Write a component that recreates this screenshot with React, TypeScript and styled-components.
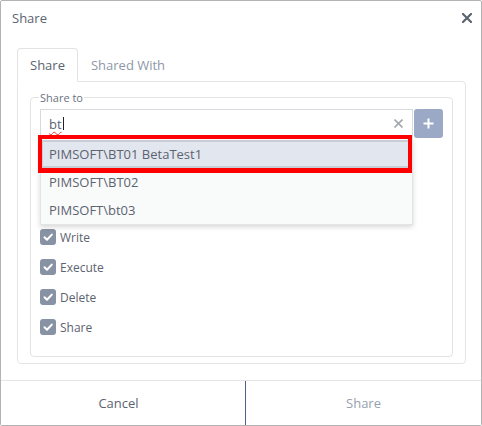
import React from "react";
import styled, { createGlobalStyle } from "styled-components";

const Global = createGlobalStyle`
  html, body { margin: 0; padding: 0; background: #fff; }
  body { font-family: "Open Sans", "Noto Sans", sans-serif; }
  * { box-sizing: border-box; }
`;

const Dialog = styled.div`
  width: 482px;
  height: 426px;
  border: 1px solid #b3b3b3;
  border-radius: 2px;
  display: flex;
  flex-direction: column;
  background: #fff;
  color: #5c6370;
`;

const Header = styled.div`
  height: 33px;
  flex: none;
  display: flex;
  align-items: center;
  justify-content: space-between;
  padding: 0 9px 0 11px;
`;

const Title = styled.div`
  font-size: 13px;
  color: #5c6370;
`;

const CloseButton = styled.button`
  border: 0;
  background: none;
  padding: 0;
  width: 10px;
  height: 10px;
  display: flex;
  cursor: pointer;
`;

const Body = styled.div`
  flex: 1;
  min-height: 0;
  display: flex;
  flex-direction: column;
  padding: 14px 15px 16px 16px;
`;

const Tabs = styled.div`
  display: flex;
  height: 33px;
  flex: none;
`;

const Tab = styled.div<{ $active?: boolean }>`
  height: 34px;
  margin-bottom: -1px;
  padding: 0 12px;
  line-height: 32px;
  font-size: 13px;
  border: 1px solid ${(p) => (p.$active ? "#e3e3e3" : "transparent")};
  border-bottom-color: ${(p) => (p.$active ? "#fff" : "transparent")};
  border-radius: 4px 4px 0 0;
  background: ${(p) => (p.$active ? "#fff" : "transparent")};
  color: ${(p) => (p.$active ? "#5c6370" : "#8e97a8")};
  position: relative;
  z-index: 1;
`;

const Panel = styled.div`
  flex: 1;
  min-height: 0;
  border: 1px solid #e5e5e5;
  border-radius: 0 4px 4px 4px;
  padding: 8px 12px 6px 12px;
  display: flex;
  flex-direction: column;
`;

const Fieldset = styled.fieldset`
  flex: 1;
  margin: 0;
  min-width: 0;
  border: 1px solid #e3e3e3;
  border-radius: 4px;
  padding: 4px 9px 0 9px;
`;

const Legend = styled.legend`
  font-size: 11px;
  line-height: 15px;
  padding: 0 1px;
  margin-left: -1px;
  color: #6b7380;
`;

const InputRow = styled.div`
  display: flex;
  gap: 1px;
  height: 29px;
  position: relative;
`;

const SearchBox = styled.div`
  flex: 1;
  border: 1px solid #d6d9dd;
  display: flex;
  align-items: center;
  padding: 0 9px 0 8px;
  font-size: 13px;
  background: #fff;
  color: #5c6370;
`;

const Typed = styled.span`
  text-decoration: underline wavy #e53935;
  text-decoration-thickness: 1px;
  text-underline-offset: 2px;
`;

const Caret = styled.span`
  width: 1px;
  height: 13px;
  background: #222;
  margin-left: 1px;
`;

const ClearButton = styled.span`
  margin-left: auto;
  width: 9px;
  height: 9px;
  display: flex;
`;

const PlusButton = styled.button`
  width: 29px;
  height: 29px;
  border: 0;
  border-radius: 3px;
  background: #9ba9c6;
  display: flex;
  align-items: center;
  justify-content: center;
  padding: 0;
`;

const Dropdown = styled.div`
  position: absolute;
  top: 100%;
  left: 0;
  width: calc(100% - 30px);
  border: 1px solid #e4e4e4;
  padding-top: 1px;
  background: #f9fafa;
  box-shadow: 0 2px 5px rgba(0, 0, 0, 0.16);
  z-index: 5;
`;

const Option = styled.div<{ $active?: boolean }>`
  height: 28px;
  padding-left: 8px;
  display: flex;
  align-items: center;
  font-size: 13px;
  color: #5c6370;
  background: ${(p) => (p.$active ? "#e2e6ee" : "transparent")};
  box-shadow: ${(p) => (p.$active ? "inset 0 0 0 2px #c9cdd4" : "none")};
`;

const Callout = styled.div`
  position: absolute;
  top: -4px;
  left: -3px;
  width: 374px;
  height: 38px;
  border-style: solid;
  border-color: #ff0000;
  border-width: 4px 4px 5px 4px;
  pointer-events: none;
`;

const CheckList = styled.div`
  margin-top: 24px;
  display: flex;
  flex-direction: column;
`;

const CheckRow = styled.label`
  height: 30px;
  display: flex;
  align-items: center;
  gap: 4px;
  font-size: 12px;
  color: #5c6370;
`;

const Box = styled.span`
  width: 16px;
  height: 16px;
  border-radius: 3px;
  background: #8892a5;
  display: flex;
  align-items: center;
  justify-content: center;
`;

const Footer = styled.div`
  height: 45px;
  flex: none;
  border-top: 1px solid #e5e5e5;
  display: flex;
`;

const FooterButton = styled.button<{ $primary?: boolean }>`
  border: 0;
  border-left: ${(p) => (p.$primary ? "1px solid #4f5f8f" : "0")};
  background: #fff;
  font-family: inherit;
  font-size: 13px;
  color: ${(p) => (p.$primary ? "#959fb0" : "#5c6370")};
  display: flex;
  align-items: center;
  justify-content: center;
  padding: 0 ${(p) => (p.$primary ? "0" : "9px")} 0 0;
  width: ${(p) => (p.$primary ? "auto" : "244px")};
  flex: ${(p) => (p.$primary ? "1" : "none")};
`;

const permissions = ["Full Control", "Read", "Write", "Execute", "Delete", "Share"];
const options = ["PIMSOFT\\BT01 BetaTest1", "PIMSOFT\\BT02", "PIMSOFT\\bt03"];

export default function App() {
  return (
    <>
      <Global />
      <Dialog>
        <Header>
          <Title>Share</Title>
          <CloseButton aria-label="Close">
            <svg width="10" height="10" viewBox="0 0 10 10">
              <path d="M1 1L9 9M9 1L1 9" stroke="#5c6370" strokeWidth="2.2" strokeLinecap="square" />
            </svg>
          </CloseButton>
        </Header>
        <Body>
          <Tabs>
            <Tab $active>Share</Tab>
            <Tab>Shared With</Tab>
          </Tabs>
          <Panel>
            <Fieldset>
              <Legend>Share to</Legend>
              <InputRow>
                <SearchBox>
                  <Typed>bt</Typed>
                  <Caret />
                  <ClearButton>
                    <svg width="9" height="9" viewBox="0 0 9 9">
                      <path d="M0.5 0.5L8.5 8.5M8.5 0.5L0.5 8.5" stroke="#a3a7ae" strokeWidth="1.6" />
                    </svg>
                  </ClearButton>
                </SearchBox>
                <PlusButton aria-label="Add">
                  <svg width="11" height="11" viewBox="0 0 11 11">
                    <path d="M5.5 0.5V10.5M0.5 5.5H10.5" stroke="#fff" strokeWidth="2" />
                  </svg>
                </PlusButton>
                <Dropdown>
                  {options.map((o, i) => (
                    <Option key={o} $active={i === 0}>
                      {o}
                    </Option>
                  ))}
                  <Callout />
                </Dropdown>
              </InputRow>
              <CheckList>
                {permissions.map((p) => (
                  <CheckRow key={p}>
                    <Box>
                      <svg width="12" height="12" viewBox="0 0 12 12">
                        <path d="M2.5 6.3L5 8.7L9.8 3.6" fill="none" stroke="#fff" strokeWidth="2" strokeLinecap="round" strokeLinejoin="round" />
                      </svg>
                    </Box>
                    {p}
                  </CheckRow>
                ))}
              </CheckList>
            </Fieldset>
          </Panel>
        </Body>
        <Footer>
          <FooterButton>Cancel</FooterButton>
          <FooterButton $primary>Share</FooterButton>
        </Footer>
      </Dialog>
    </>
  );
}
